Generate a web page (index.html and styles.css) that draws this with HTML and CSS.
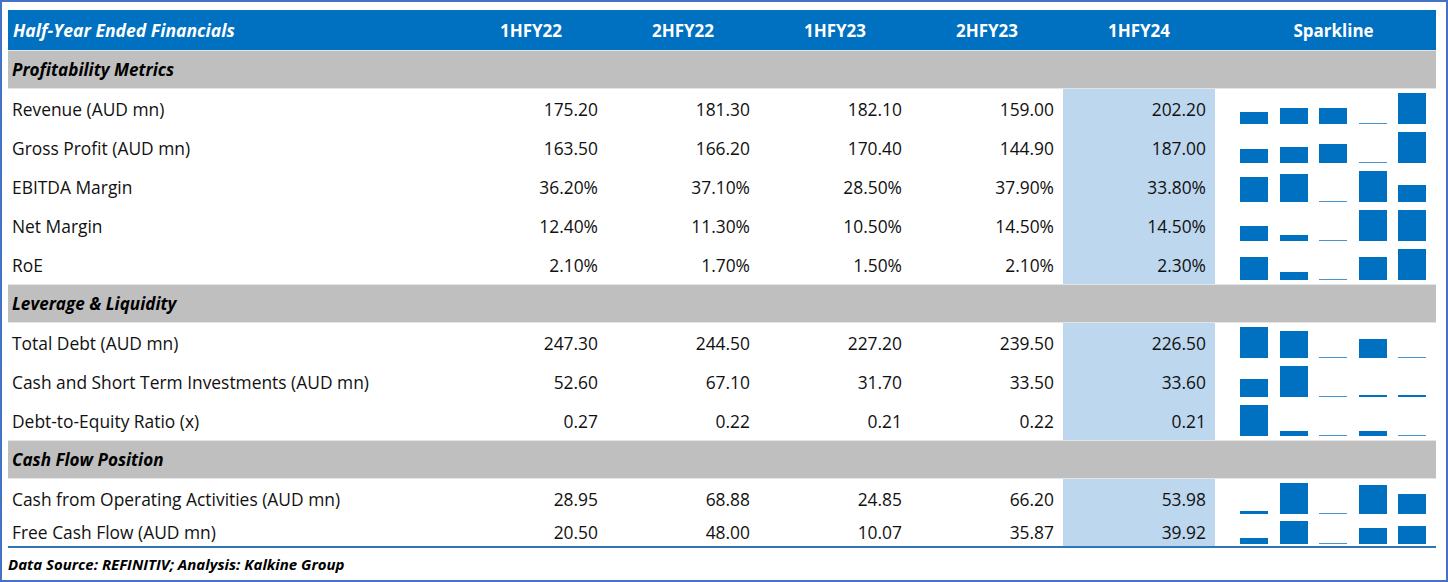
FILE: index.html
```html
<!DOCTYPE html>
<html>
<head>
<meta charset="utf-8">
<link rel="stylesheet" href="styles.css">
</head>
<body>
<div class="frame">
  <div class="table">
    <div class="row head">
      <div class="cell label">Half-Year Ended Financials</div>
      <div class="cell c">1HFY22</div>
      <div class="cell c">2HFY22</div>
      <div class="cell c">1HFY23</div>
      <div class="cell c">2HFY23</div>
      <div class="cell c">1HFY24</div>
      <div class="cell c spk-h">Sparkline</div>
    </div>

    <div class="row section"><div class="cell label">Profitability Metrics</div></div>

    <div class="row">
      <div class="cell label">Revenue (AUD mn)</div>
      <div class="cell num">175.20</div><div class="cell num">181.30</div><div class="cell num">182.10</div><div class="cell num">159.00</div><div class="cell num hl">202.20</div>
      <div class="cell spark"><i style="height:11.6px"></i><i style="height:16px"></i><i style="height:16.5px"></i><i class="min"></i><i style="height:31px"></i></div>
    </div>
    <div class="row">
      <div class="cell label">Gross Profit (AUD mn)</div>
      <div class="cell num">163.50</div><div class="cell num">166.20</div><div class="cell num">170.40</div><div class="cell num">144.90</div><div class="cell num hl">187.00</div>
      <div class="cell spark"><i style="height:13.7px"></i><i style="height:15.7px"></i><i style="height:18.8px"></i><i class="min"></i><i style="height:31px"></i></div>
    </div>
    <div class="row">
      <div class="cell label">EBITDA Margin</div>
      <div class="cell num">36.20%</div><div class="cell num">37.10%</div><div class="cell num">28.50%</div><div class="cell num">37.90%</div><div class="cell num hl">33.80%</div>
      <div class="cell spark"><i style="height:25.4px"></i><i style="height:28.4px"></i><i class="min"></i><i style="height:31px"></i><i style="height:17.5px"></i></div>
    </div>
    <div class="row">
      <div class="cell label">Net Margin</div>
      <div class="cell num">12.40%</div><div class="cell num">11.30%</div><div class="cell num">10.50%</div><div class="cell num">14.50%</div><div class="cell num hl">14.50%</div>
      <div class="cell spark"><i style="height:14.7px"></i><i style="height:6.2px"></i><i class="min"></i><i style="height:31px"></i><i style="height:31px"></i></div>
    </div>
    <div class="row">
      <div class="cell label">RoE</div>
      <div class="cell num">2.10%</div><div class="cell num">1.70%</div><div class="cell num">1.50%</div><div class="cell num">2.10%</div><div class="cell num hl">2.30%</div>
      <div class="cell spark"><i style="height:23.2px"></i><i style="height:7.7px"></i><i class="min"></i><i style="height:23.2px"></i><i style="height:31px"></i></div>
    </div>

    <div class="row section"><div class="cell label">Leverage &amp; Liquidity</div></div>

    <div class="row">
      <div class="cell label">Total Debt (AUD mn)</div>
      <div class="cell num">247.30</div><div class="cell num">244.50</div><div class="cell num">227.20</div><div class="cell num">239.50</div><div class="cell num hl">226.50</div>
      <div class="cell spark"><i style="height:31px"></i><i style="height:26.8px"></i><i class="min"></i><i style="height:19.4px"></i><i class="min"></i></div>
    </div>
    <div class="row">
      <div class="cell label">Cash and Short Term Investments (AUD mn)</div>
      <div class="cell num">52.60</div><div class="cell num">67.10</div><div class="cell num">31.70</div><div class="cell num">33.50</div><div class="cell num hl">33.60</div>
      <div class="cell spark"><i style="height:18.3px"></i><i style="height:31px"></i><i class="min"></i><i style="height:1.6px"></i><i style="height:1.7px"></i></div>
    </div>
    <div class="row">
      <div class="cell label">Debt-to-Equity Ratio (x)</div>
      <div class="cell num">0.27</div><div class="cell num">0.22</div><div class="cell num">0.21</div><div class="cell num">0.22</div><div class="cell num hl">0.21</div>
      <div class="cell spark"><i style="height:31px"></i><i style="height:5.2px"></i><i class="min"></i><i style="height:5.2px"></i><i class="min"></i></div>
    </div>

    <div class="row section"><div class="cell label">Cash Flow Position</div></div>

    <div class="row">
      <div class="cell label">Cash from Operating Activities (AUD mn)</div>
      <div class="cell num">28.95</div><div class="cell num">68.88</div><div class="cell num">24.85</div><div class="cell num">66.20</div><div class="cell num hl">53.98</div>
      <div class="cell spark"><i style="height:2.9px"></i><i style="height:31px"></i><i class="min"></i><i style="height:29.1px"></i><i style="height:20.5px"></i></div>
    </div>
    <div class="row last">
      <div class="cell label">Free Cash Flow (AUD mn)</div>
      <div class="cell num">20.50</div><div class="cell num">48.00</div><div class="cell num">10.07</div><div class="cell num">35.87</div><div class="cell num hl">39.92</div>
      <div class="cell spark"><i style="height:6.3px"></i><i style="height:23px"></i><i class="min"></i><i style="height:15.6px"></i><i style="height:18.1px"></i></div>
    </div>
  </div>
  <div class="source">Data Source: REFINITIV; Analysis: Kalkine Group</div>
</div>
</body>
</html>
```

FILE: styles.css
```css
html, body {
  margin: 0;
  padding: 0;
  background: #ffffff;
}

.frame {
  box-sizing: border-box;
  width: 1448px;
  height: 582px;
  border: 2px solid #4472c4;
  padding: 8px 10px 0 6px;
  font-family: "Open Sans", Lato, "Liberation Sans", sans-serif;
  color: #111111;
}

.table {
  width: 1428px;
  border-bottom: 2px solid #2e75b6;
}

.row {
  display: grid;
  grid-template-columns: 447px repeat(5, 152px) 221px;
  height: 39px;
  font-size: 17.4px;
}

.cell {
  display: flex;
  align-items: center;
  white-space: nowrap;
}

.label {
  padding-left: 4px;
}

.num {
  justify-content: flex-end;
  padding-right: 9px;
}

.hl {
  background: #bdd7ee;
}

.c {
  justify-content: center;
}

.head {
  height: 40px;
  background: #0070c0;
  color: #ffffff;
  font-weight: bold;
  font-size: 17px;
}

.head .label {
  font-style: italic;
  font-size: 17.6px;
  padding-left: 5px;
}

.spk-h {
  padding-left: 16px;
}

.section {
  background: #bfbfbf;
  border-top: 1px solid #e4e4e4;
  border-bottom: 1px solid #e4e4e4;
  box-sizing: border-box;
  font-weight: bold;
  font-style: italic;
  color: #000000;
  font-size: 17.1px;
}

.section .label {
  grid-column: 1 / -1;
}

.spark {
  align-items: flex-end;
  gap: 11.5px;
  padding: 0 0 4px 25px;
}

.spark i {
  display: block;
  width: 28px;
  background: #0070c0;
}

.spark i.min {
  height: 1px;
  background: #4a94d2;
}

.last {
  height: 28px;
}

.last .spark {
  padding-bottom: 2px;
}

.source {
  padding-top: 6px;
  font-size: 15px;
  font-weight: bold;
  font-style: italic;
  color: #000000;
}
```
